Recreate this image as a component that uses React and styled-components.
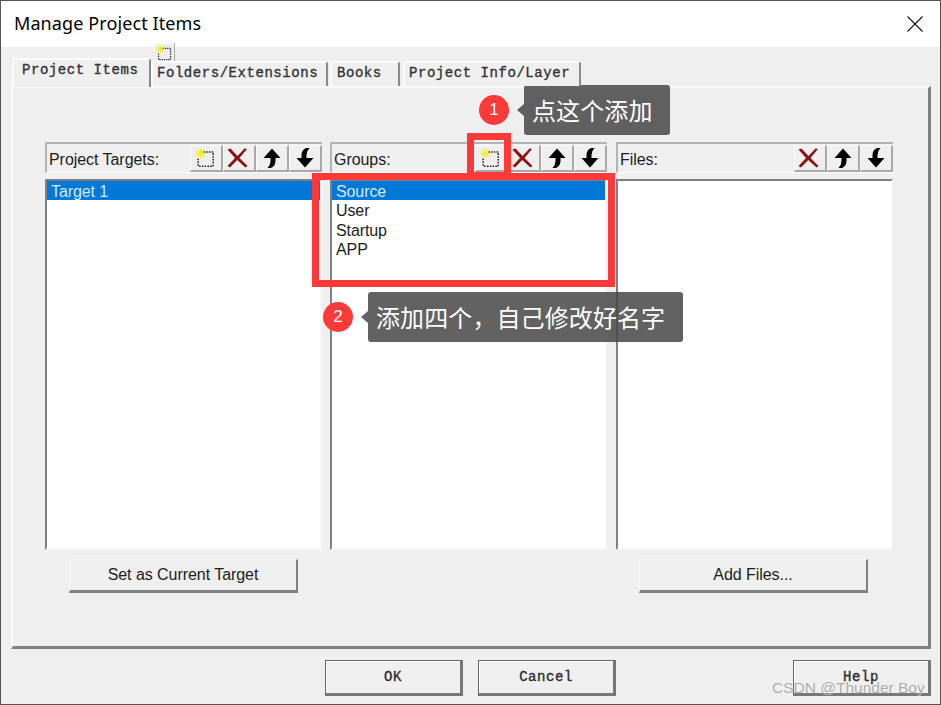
import React from 'react';
import styled, { createGlobalStyle } from 'styled-components';

const GlobalStyle = createGlobalStyle`
    html, body {
        margin: 0;
        padding: 0;
        background: #efefef;
    }
    * {
        box-sizing: border-box;
    }
`;

const UI_FONT = `"Liberation Sans", Arial, sans-serif`;
const MONO_FONT = `"Liberation Mono", "Courier New", monospace`;
const CJK_FONT = `"Noto Sans CJK SC", "Noto Sans", sans-serif`;

const Window = styled.div`
    position: relative;
    display: flex;
    flex-direction: column;
    width: 941px;
    height: 705px;
    border: 1px solid #555555;
    background: #efefef;
    overflow: hidden;
`;

const TitleBar = styled.div`
    display: flex;
    align-items: center;
    justify-content: space-between;
    height: 46px;
    padding: 0 17px 0 13px;
    background: #ffffff;
`;

const Title = styled.div`
    padding-bottom: 2px;
    font-family: "Noto Sans", sans-serif;
    font-size: 18px;
    letter-spacing: 0.1px;
    color: #000000;
`;

const TabStrip = styled.div`
    display: flex;
    align-items: flex-end;
    height: 29px;
    margin: 10px 0 0 11px;
`;

const Tab = styled.div`
    position: relative;
    z-index: ${(p) => (p.$active ? 2 : 1)};
    width: ${(p) => p.$width}px;
    height: ${(p) => (p.$active ? 29 : 25)}px;
    margin-right: ${(p) => p.$gap}px;
    margin-bottom: ${(p) => (p.$active ? -1 : 0)}px;
    padding: 1px 0 0 ${(p) => p.$pad}px;
    border-top: 2px solid #fbfbfb;
    border-left: 2px solid #fbfbfb;
    border-right: 2px solid #8a8a8a;
    border-radius: 3px 3px 0 0;
    background: #efefef;
    font-family: ${MONO_FONT};
    font-size: 14px;
    -webkit-text-stroke: 0.35px #333333;
    letter-spacing: 0.55px;
    line-height: 18px;
    white-space: nowrap;
    color: #333333;
`;

const Panel = styled.div`
    width: 920px;
    height: 563px;
    margin-left: 10px;
    padding: 54px 0 0 32px;
    border-top: 2px solid #fafafa;
    border-left: 2px solid #fafafa;
    border-right: 3px solid #808080;
    border-bottom: 3px solid #808080;
`;

const Columns = styled.div`
    display: grid;
    grid-template-columns: 285px 286px 277px;
`;

const Column = styled.div`
    display: flex;
    flex-direction: column;
    width: 277px;
`;

const ListHeader = styled.div`
    display: flex;
    align-items: flex-end;
    justify-content: space-between;
    height: 31px;
    border-top: 2px solid #b4b4b4;
    border-left: 2px solid #b4b4b4;
    border-bottom: 1px solid #fbfbfb;
`;

const HeaderLabel = styled.div`
    align-self: center;
    padding: 4px 0 0 2px;
    font-family: ${UI_FONT};
    font-size: 16px;
    letter-spacing: -0.05px;
    color: #1d1d1d;
`;

const Toolbar = styled.div`
    display: flex;
`;

const ToolButton = styled.div`
    display: flex;
    align-items: center;
    justify-content: center;
    width: 33px;
    height: 27px;
    padding-right: ${(p) => p.$nudge || 0}px;
    border-top: 1px solid #fafafa;
    border-left: 1px solid #fafafa;
    border-right: 2px solid #a8a8a8;
    border-bottom: 2px solid #a8a8a8;
`;

const ListBox = styled.div`
    height: 371px;
    margin-top: 6px;
    border-top: 2px solid #808080;
    border-left: 2px solid #808080;
    border-right: 2px solid #f7f7f7;
    border-bottom: 2px solid #f7f7f7;
    background: #ffffff;
`;

const ListRow = styled.div`
    height: 19.4px;
    padding-left: ${(p) => p.$indent}px;
    background: ${(p) => (p.$selected ? '#0078d7' : 'transparent')};
    font-family: ${UI_FONT};
    font-size: 16px;
    letter-spacing: -0.1px;
    line-height: 21px;
    color: ${(p) => (p.$selected ? '#d6e9fa' : '#1d1d1d')};
`;

const WideButton = styled.div`
    display: flex;
    align-items: center;
    justify-content: center;
    width: 229px;
    height: 34px;
    margin: 9px 0 0 ${(p) => p.$offset}px;
    border-top: 1px solid #f8f8f8;
    border-left: 1px solid #f8f8f8;
    border-right: 2px solid #808080;
    border-bottom: 3px solid #808080;
    font-family: ${UI_FONT};
    font-size: 16px;
    letter-spacing: -0.05px;
    color: #1d1d1d;
`;

const Footer = styled.div`
    display: flex;
    margin-top: 11px;
    padding-left: 324px;
`;

const DialogButton = styled.div`
    display: flex;
    align-items: center;
    justify-content: center;
    width: 138px;
    height: 36px;
    margin-right: ${(p) => p.$gap}px;
    border: 1px solid #666666;
    border-right: 3px solid #777777;
    border-bottom: 3px solid #777777;
    box-shadow: inset 1px 1px 0 #ffffff;
    font-family: ${MONO_FONT};
    font-size: 14px;
    -webkit-text-stroke: 0.35px #2b2b2b;
    letter-spacing: 0.55px;
    color: #2b2b2b;
`;

const FloatingIcon = styled.div`
    position: absolute;
    left: 152px;
    top: 42px;
    display: flex;
    align-items: center;
    justify-content: center;
    width: 22px;
    height: 20px;
    background: #efefef;
    border-top: 1px solid #fafafa;
    border-left: 1px solid #fafafa;
    border-right: 1px solid #a8a8a8;
    border-bottom: 1px solid #a8a8a8;
`;

const RedBox = styled.div`
    position: absolute;
    left: ${(p) => p.$x}px;
    top: ${(p) => p.$y}px;
    width: ${(p) => p.$w}px;
    height: ${(p) => p.$h}px;
    border: 7px solid #fc3a3a;
`;

const Callout = styled.div`
    position: absolute;
    left: ${(p) => p.$x}px;
    top: ${(p) => p.$y}px;
    display: flex;
    align-items: center;
`;

const Badge = styled.div`
    display: flex;
    align-items: center;
    justify-content: center;
    width: 30px;
    height: 30px;
    border-radius: 50%;
    background: #fc3a3a;
    font-family: ${UI_FONT};
    font-size: 17px;
    color: #ffffff;
`;

const Arrow = styled.div`
    width: 0;
    height: 0;
    margin-left: 8px;
    border-top: 6px solid transparent;
    border-bottom: 6px solid transparent;
    border-right: 7px solid rgba(68, 68, 68, 0.84);
`;

const Bubble = styled.div`
    width: ${(p) => p.$w}px;
    height: 50px;
    padding-left: 8px;
    border-radius: 3px;
    background: rgba(68, 68, 68, 0.84);
    font-family: ${CJK_FONT};
    font-size: 24px;
    letter-spacing: 0.1px;
    line-height: 50px;
    white-space: nowrap;
    color: #ffffff;
`;

const Watermark = styled.div`
    position: absolute;
    left: 771px;
    top: 677px;
    font-family: ${UI_FONT};
    font-size: 15.5px;
    line-height: 19px;
    white-space: nowrap;
    color: rgba(150, 150, 150, 0.8);
    text-shadow: 0 0 1px rgba(255, 255, 255, 0.8);
`;

const CloseIcon = () => (
    <svg width="16" height="16" viewBox="0 0 16 16">
        <path d="M0.5 0.5 L15.5 15.5 M15.5 0.5 L0.5 15.5" stroke="#111111" strokeWidth="1.1" fill="none" />
    </svg>
);

const NewIcon = ({ size = 20 }) => (
    <svg width={size} height={size} viewBox="0 0 22 22">
        <path d="M9 4.5 H20 V20 H3.5 V11" stroke="#222222" strokeWidth="1.7" strokeDasharray="1.7 1.4" fill="none" />
        <path
            d="M6 0.5 V11.5 M0.5 6 H11.5 M2 2 L10 10 M10 2 L2 10"
            stroke="#f5ef2a"
            strokeWidth="1.5"
            fill="none"
        />
    </svg>
);

const DeleteIcon = () => (
    <svg width="21" height="20" viewBox="0 0 21 20">
        <path d="M0.5 1.5 L3.5 0.5 L10.5 8 L17.5 0.5 L20 1 L12.5 10 L20.5 18 L18.5 19.5 L10.2 12 L3 19.5 L0.5 18 L8 10 Z" fill="#8c1414" />
    </svg>
);

const ArrowSvg = styled.svg`
    transform: ${(p) => (p.$down ? 'rotate(180deg)' : 'none')};
`;

const MoveIcon = ({ down }) => (
    <ArrowSvg $down={down} width="18" height="20" viewBox="0 0 18 20">
        <path d="M9 0.5 L17.5 10 H12.5 V13 Q12.5 18 8 20 H4.5 Q7.5 17 7.5 13 V10 H0.5 Z" fill="#000000" />
    </ArrowSvg>
);

const TABS = [
    { label: 'Project Items', width: 139, gap: 0, pad: 8, active: true },
    { label: 'Folders/Extensions', width: 177, gap: 2, pad: 4 },
    { label: 'Books', width: 70, gap: 3, pad: 5 },
    { label: 'Project Info/Layer', width: 178, gap: 0, pad: 4 },
];

const COLUMNS = [
    { label: 'Project Targets:', canAdd: true, items: ['Target 1'], indent: 4, button: 'Set as Current Target', offset: 24 },
    { label: 'Groups:', canAdd: true, items: ['Source', 'User', 'Startup', 'APP'], indent: 4 },
    { label: 'Files:', canAdd: false, items: [], indent: 3, button: 'Add Files...', offset: 23 },
];

const App = () => {
    return (
        <>
            <GlobalStyle />
            <Window>
                <TitleBar>
                    <Title>Manage Project Items</Title>
                    <CloseIcon />
                </TitleBar>
                <TabStrip>
                    {TABS.map((tab) => (
                        <Tab key={tab.label} $active={tab.active} $width={tab.width} $gap={tab.gap} $pad={tab.pad}>
                            {tab.label}
                        </Tab>
                    ))}
                </TabStrip>
                <Panel>
                    <Columns>
                        {COLUMNS.map((col) => (
                            <Column key={col.label}>
                                <ListHeader>
                                    <HeaderLabel>{col.label}</HeaderLabel>
                                    <Toolbar>
                                        {col.canAdd && <ToolButton $nudge={3}><NewIcon /></ToolButton>}
                                        <ToolButton $nudge={3}><DeleteIcon /></ToolButton>
                                        <ToolButton><MoveIcon /></ToolButton>
                                        <ToolButton><MoveIcon down /></ToolButton>
                                    </Toolbar>
                                </ListHeader>
                                <ListBox>
                                    {col.items.map((item, i) => (
                                        <ListRow key={item} $selected={i === 0} $indent={col.indent}>
                                            {item}
                                        </ListRow>
                                    ))}
                                </ListBox>
                                {col.button && <WideButton $offset={col.offset}>{col.button}</WideButton>}
                            </Column>
                        ))}
                    </Columns>
                </Panel>
                <Footer>
                    <DialogButton $gap={15}>OK</DialogButton>
                    <DialogButton $gap={177}>Cancel</DialogButton>
                    <DialogButton $gap={0}>Help</DialogButton>
                </Footer>

                <FloatingIcon><NewIcon size={16} /></FloatingIcon>
                <RedBox $x={311} $y={172} $w={303} $h={114} />
                <RedBox $x={466} $y={132} $w={44} $h={46} />
                <Callout $x={478} $y={84}>
                    <Badge>1</Badge>
                    <Arrow />
                    <Bubble $w={146}>点这个添加</Bubble>
                </Callout>
                <Callout $x={322} $y={291}>
                    <Badge>2</Badge>
                    <Arrow />
                    <Bubble $w={315}>添加四个，自己修改好名字</Bubble>
                </Callout>
                <Watermark>CSDN @Thunder Boy</Watermark>
            </Window>
        </>
    );
};

export default App;
